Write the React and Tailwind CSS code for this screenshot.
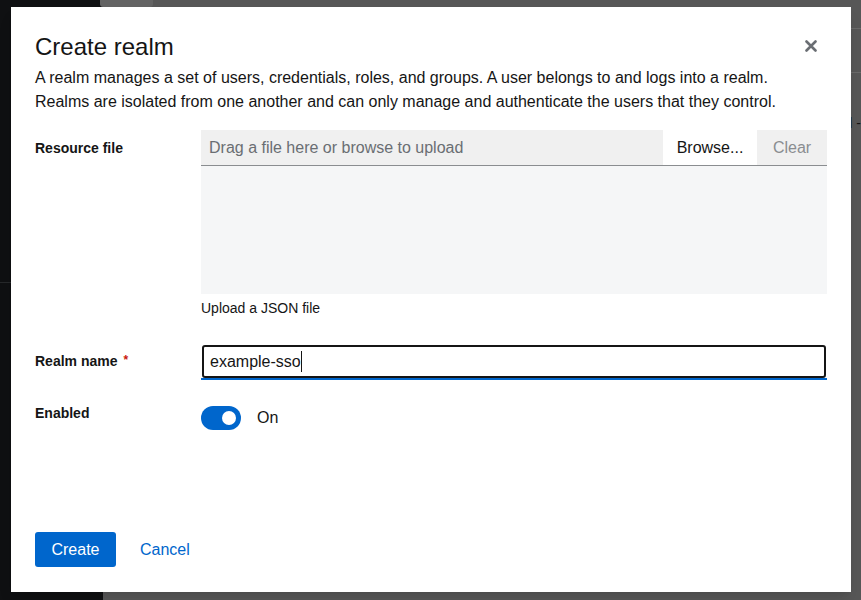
import React from 'react';

const font = { fontFamily: '"Liberation Sans", Arial, sans-serif' };

const FormRow = ({ label, required, children, labelClass = 'pt-[8px]' }) => (
  <div className="flex">
    <div className={`w-[166px] shrink-0 text-[14px] font-bold text-[#151515] ${labelClass}`}>
      {label}
      {required && <span className="ml-[6px] text-[12px] align-top text-[#c9190b]">*</span>}
    </div>
    <div className="flex-1 min-w-0">{children}</div>
  </div>
);

const CreateRealmModal = () => (
  <div className="absolute left-[11px] top-[7px] w-[840px] h-[585px] bg-white flex flex-col px-6 pt-[25px] pb-[25px] shadow-lg">
    <div className="flex items-start justify-between">
      <h1 className="text-[24px] leading-[30px] text-[#151515]">Create realm</h1>
      <button className="mt-[8px] mr-[10px] text-[#6a6e73]" aria-label="Close">
        <svg width="12" height="12" viewBox="0 0 12 12">
          <path d="M1.5 1.5 L10.5 10.5 M10.5 1.5 L1.5 10.5" stroke="currentColor" strokeWidth="2.6" strokeLinecap="round" />
        </svg>
      </button>
    </div>
    <p className="mt-1 text-[16px] leading-[24px] text-[#151515]">
      A realm manages a set of users, credentials, roles, and groups. A user belongs to and logs into a realm.
      <br />
      Realms are isolated from one another and can only manage and authenticate the users that they control.
    </p>

    <div className="mt-[16px] flex flex-col">
      <FormRow label="Resource file">
        <div className="flex h-[36px] bg-[#f0f0f0] border-b border-[#8a8d90]">
          <div className="flex-1 flex items-center px-2 text-[16px] text-[#6a6e73]">
            Drag a file here or browse to upload
          </div>
          <button className="w-[94px] bg-white text-[16px] text-[#151515] -mb-px border-b border-[#8a8d90]">Browse...</button>
          <button className="w-[70px] text-[16px] text-[#8a8d90]">Clear</button>
        </div>
        <div className="h-[128px] bg-[#f5f6f7]" />
        <div className="mt-[4px] text-[14px] leading-[21px] text-[#151515]">Upload a JSON file</div>
      </FormRow>

      <div className="mt-[26px]">
        <FormRow label="Realm name" required labelClass="pt-[6px]">
          <div className="border-b-2 border-[#0066cc]">
            <div className="h-[33px] mx-px border-2 border-[#151515] rounded-[3px] flex items-center px-[6px] text-[16px] text-[#151515]">
              example-sso
              <span className="w-px h-[21px] bg-[#151515]" />
            </div>
          </div>
        </FormRow>
      </div>

      <div className="mt-[26px]">
        <FormRow label="Enabled" labelClass="-mt-[3px]">
          <div className="flex items-center gap-4">
            <div className="relative w-[40px] h-[24px] rounded-full bg-[#0066cc]">
              <span className="absolute right-[5px] top-[5px] w-[14px] h-[14px] rounded-full bg-white" />
            </div>
            <span className="text-[16px] text-[#151515]">On</span>
          </div>
        </FormRow>
      </div>
    </div>

    <div className="mt-auto flex items-center gap-6">
      <button className="h-[35px] w-[81px] rounded-[3px] bg-[#0066cc] text-white text-[16px]">Create</button>
      <button className="text-[16px] text-[#0066cc]">Cancel</button>
    </div>
  </div>
);

export default function App() {
  return (
    <div className="relative w-[861px] h-[600px] overflow-hidden flex" style={font}>
      <div className="w-[103px] shrink-0 bg-[#0f1012] flex flex-col">
        <div className="h-[283px] border-b border-[#26282a]" />
      </div>
      <div className="flex-1 bg-[#575757] flex flex-col">
        <div className="h-[29px] border-b border-[#6a6a6a] flex">
          <div className="ml-[-3px] w-[53px] h-[7px] bg-[#636363] rounded-b-[3px]" />
        </div>
        <div className="h-[44px] border-b border-[#6a6a6a]" />
        <div className="flex justify-end pt-[42px] text-[14px] leading-[16px] text-[#151515]">l -</div>
      </div>
      <CreateRealmModal />
    </div>
  );
}
